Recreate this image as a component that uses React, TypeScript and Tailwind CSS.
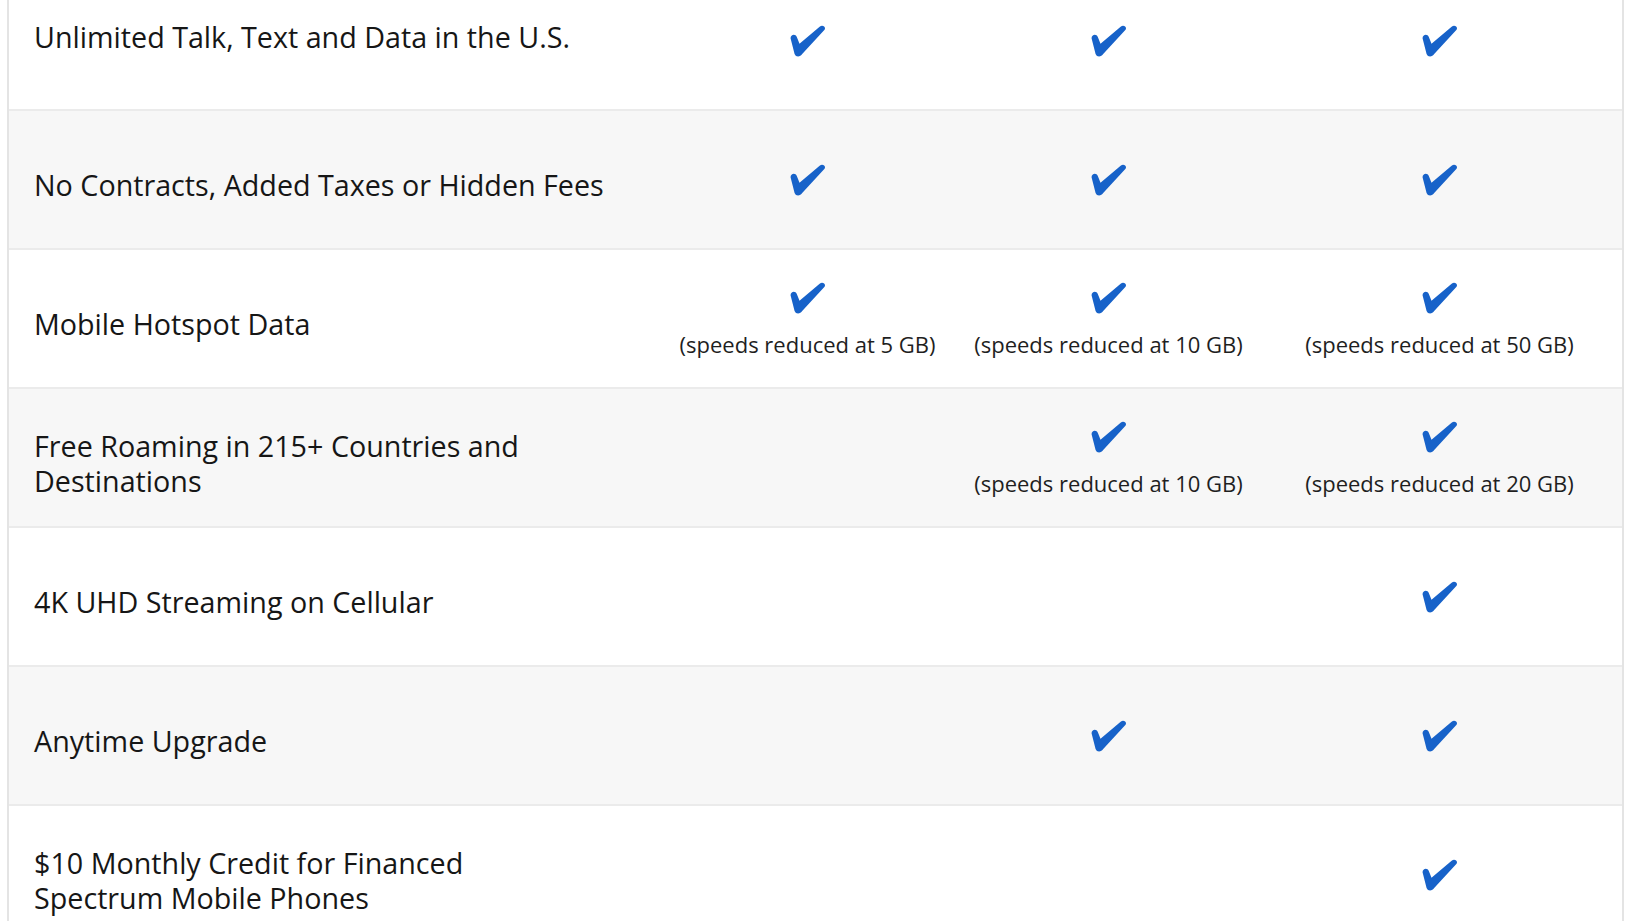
const rows: {
  label: React.ReactNode;
  cells: (null | { note?: string })[];
}[] = [
  { label: "Unlimited Talk, Text and Data in the U.S.", cells: [{}, {}, {}] },
  { label: "No Contracts, Added Taxes or Hidden Fees", cells: [{}, {}, {}] },
  {
    label: "Mobile Hotspot Data",
    cells: [
      { note: "(speeds reduced at 5 GB)" },
      { note: "(speeds reduced at 10 GB)" },
      { note: "(speeds reduced at 50 GB)" },
    ],
  },
  {
    label: (
      <>
        Free Roaming in 215+ Countries and
        <br />
        Destinations
      </>
    ),
    cells: [null, { note: "(speeds reduced at 10 GB)" }, { note: "(speeds reduced at 20 GB)" }],
  },
  { label: "4K UHD Streaming on Cellular", cells: [null, null, {}] },
  { label: "Anytime Upgrade", cells: [null, {}, {}] },
  {
    label: (
      <>
        $10 Monthly Credit for Financed
        <br />
        Spectrum Mobile Phones
      </>
    ),
    cells: [null, null, {}],
  },
];

function Check() {
  return (
    <svg width="36" height="34" viewBox="0 0 40 38" className="shrink-0">
      <path
        d="M0.5 16 C0.5 11.5 6 10.5 7.5 14.5 L10.5 22 L33 3 C36 0.5 40.5 3 38.5 6.5 L13.5 33.5 C11.5 37 6.5 37.5 5 33.5 Z"
        fill="#1762c9"
      />
    </svg>
  );
}

export default function App() {
  return (
    <div className="h-[921px] overflow-hidden bg-white" style={{ fontFamily: "'Open Sans', Lato, sans-serif" }}>
      <div className="ml-[7px] w-[1617px] border-x-2 border-[#e4e4e4] -mt-[28px]">
        {rows.map((row, i) => (
          <div
            key={i}
            className={`grid h-[139px] grid-cols-[646px_305px_297px_1fr] border-b-2 border-[#ebebeb] ${
              i % 2 === 1 ? "bg-[#f7f7f7]" : "bg-white"
            }`}
          >
            <div
              className={`flex items-center pl-[25px] text-[28.7px] leading-[34.5px] text-[#161616] ${
                i === 0 ? "pb-[7px]" : "pt-[12px]"
              }`}
            >
              <span>{row.label}</span>
            </div>
            {row.cells.map((c, j) => (
              <div key={j} className="flex flex-col items-center justify-center gap-[16px]">
                {c && <Check />}
                {c?.note && (
                  <span className="text-[22px] leading-[26px] text-[#1f1f1f]">{c.note}</span>
                )}
              </div>
            ))}
          </div>
        ))}
      </div>
    </div>
  );
}
